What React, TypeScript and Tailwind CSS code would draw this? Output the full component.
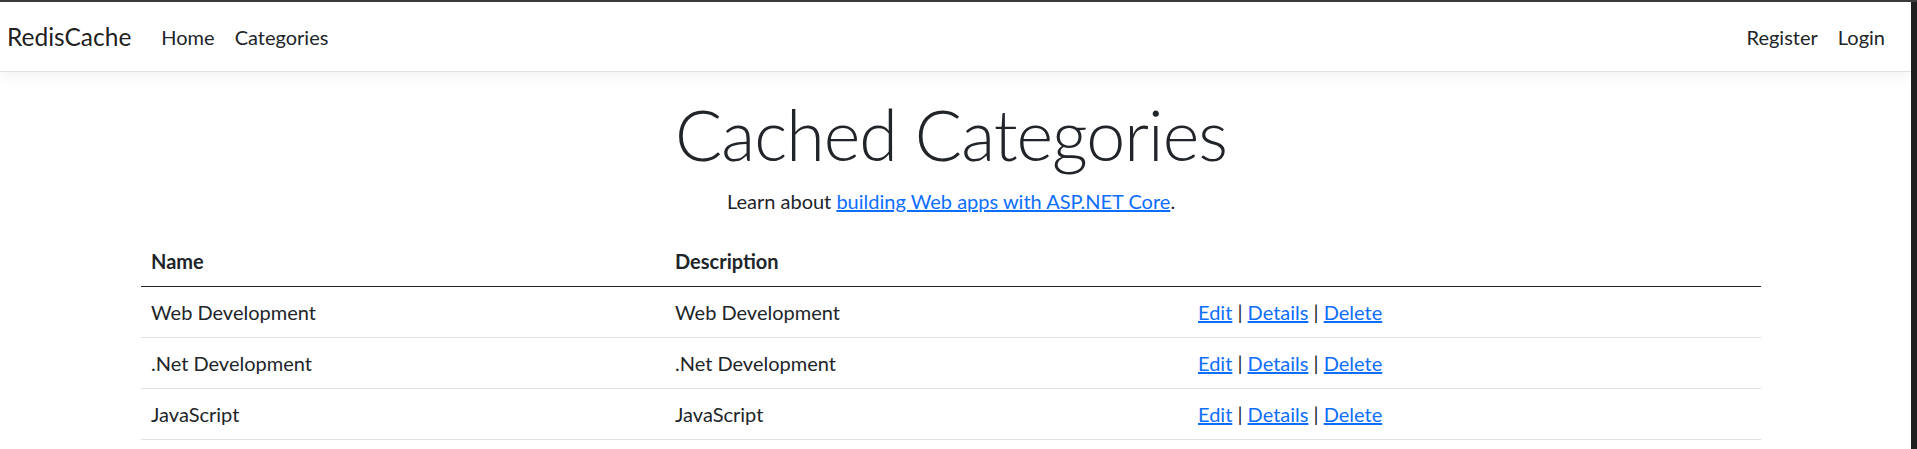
const rows = ["Web Development", ".Net Development", "JavaScript"];

function Actions() {
  return (
    <span>
      <a href="#" className="text-[#0d6efd] underline">Edit</a> |{" "}
      <a href="#" className="text-[#0d6efd] underline">Details</a> |{" "}
      <a href="#" className="text-[#0d6efd] underline">Delete</a>
    </span>
  );
}

export default function App() {
  return (
    <div className="flex h-[449px] w-[1917px] flex-col overflow-hidden bg-white font-['Lato',sans-serif] text-[#212529]">
      <div className="h-[2px] bg-[#3c3c3c]" />
      <div className="flex flex-1">
        <div className="flex-1">
          <nav className="flex h-[70px] items-center justify-between border-b border-[#dee2e6] bg-white pr-[16px] pl-[7px] shadow-[0_5px_15px_rgba(0,0,0,0.05)]">
            <div className="flex items-center">
              <a href="#" className="mr-[20px] text-[24.5px] leading-[38px] text-black/90">RedisCache</a>
              <a href="#" className="px-[10px] text-[20px] leading-[30px]">Home</a>
              <a href="#" className="px-[10px] text-[20px] leading-[30px]">Categories</a>
            </div>
            <div className="flex items-center">
              <a href="#" className="px-[10px] text-[20px] leading-[30px]">Register</a>
              <a href="#" className="px-[10px] text-[20px] leading-[30px]">Login</a>
            </div>
          </nav>
          <main className="ml-[141px] w-[1620px] pt-[20px]">
            <div className="text-center">
              <h1 className="mb-[10px] text-[70px] leading-[84px] font-light tracking-[-1px]">Cached Categories</h1>
              <p className="mb-[20px] text-[20px] leading-[30px]">
                Learn about{" "}
                <a href="#" className="text-[#0d6efd] underline">building Web apps with ASP.NET Core</a>.
              </p>
            </div>
            <table className="w-full border-collapse text-[20px] leading-[30px]">
              <thead>
                <tr className="border-b border-[#212529]">
                  <th className="w-[524px] p-[10px] text-left font-bold">Name</th>
                  <th className="w-[523px] p-[10px] text-left font-bold">Description</th>
                  <th className="p-[10px]" />
                </tr>
              </thead>
              <tbody>
                {rows.map((r) => (
                  <tr key={r} className="border-b border-[#dee2e6]">
                    <td className="p-[10px]">{r}</td>
                    <td className="p-[10px]">{r}</td>
                    <td className="p-[10px]"><Actions /></td>
                  </tr>
                ))}
              </tbody>
            </table>
          </main>
        </div>
        <div className="w-[6px] bg-[#1f1f1f]" />
      </div>
    </div>
  );
}
